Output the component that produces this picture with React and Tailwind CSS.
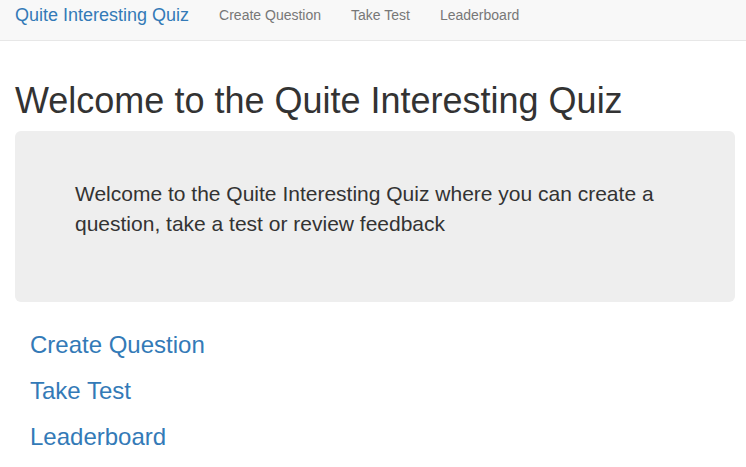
import React from 'react';

const navLinks = ['Create Question', 'Take Test', 'Leaderboard'];

export default function App() {
  return (
    <div className="min-h-screen bg-white text-[14px] leading-[20px] text-[#333] font-['Liberation_Sans',Arial,sans-serif]">
      {/* Navbar */}
      <nav className="h-[41px] bg-[#f8f8f8] border-b border-[#e7e7e7]">
        <div className="flex px-[15px]">
          <a href="#" className="-ml-[15px] px-[15px] pt-[5px] pb-[15px] text-[18px] leading-[20px] text-[#337ab7]">
            Quite Interesting Quiz
          </a>
          <ul className="flex">
            {navLinks.map((link) => (
              <li key={link}>
                <a href="#" className="block px-[15px] pt-[5px] pb-[15px] leading-[20px] text-[#777]">
                  {link}
                </a>
              </li>
            ))}
          </ul>
        </div>
      </nav>

      <div className="pl-[15px] pr-[11px] pt-[20px]">
        <h1 className="mt-[20px] mb-[10px] text-[36px] leading-[1.1] font-normal">
          Welcome to the Quite Interesting Quiz
        </h1>

        <div className="bg-[#eee] rounded-[6px] px-[60px] py-[48px] mb-[30px]">
          <p className="text-[21px] leading-[30px] mb-[15px] font-normal">
            Welcome to the Quite Interesting Quiz where you can create a question, take a test or review feedback
          </p>
        </div>

        <div className="px-[15px]">
          {navLinks.map((link, i) => (
            <h3
              key={link}
              className={`text-[24px] leading-[1.1] font-normal mb-[10px] ${i === 0 ? 'mt-0' : 'mt-[20px]'}`}
            >
              <a href="#" className="text-[#337ab7]">{link}</a>
            </h3>
          ))}
        </div>
      </div>
    </div>
  );
}
